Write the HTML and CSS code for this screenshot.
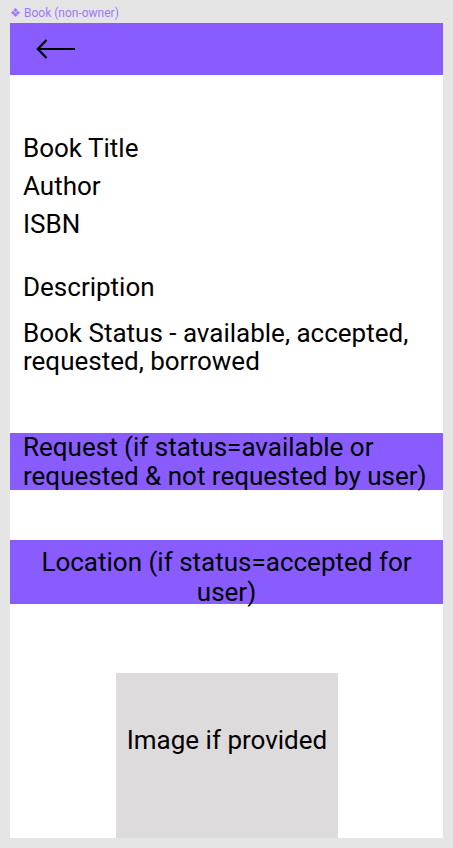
FILE: index.html
```html
<!DOCTYPE html>
<html>
<head>
<meta charset="utf-8">
<link rel="stylesheet" href="styles.css">
</head>
<body>
<div class="label">❖ Book (non-owner)</div>
<div class="frame">
  <header class="topbar">
    <svg class="back" width="40" height="22" viewBox="0 0 40 22">
      <path d="M1.5 11 H39 M10.5 2 L1.8 11 L10.5 20" fill="none" stroke="#000" stroke-width="2.2"/>
    </svg>
  </header>
  <section class="info">
    <div class="line">Book Title</div>
    <div class="line gap10">Author</div>
    <div class="line gap10">ISBN</div>
    <div class="line desc">Description</div>
    <div class="line status">Book Status - available, accepted, requested, borrowed</div>
  </section>
  <div class="bar request">Request (if status=available or requested &amp; not requested by user)</div>
  <div class="bar location">Location (if status=accepted for user)</div>
  <div class="image">Image if provided</div>
</div>
</body>
</html>
```
FILE: styles.css
```css
html, body { margin: 0; padding: 0; }
body {
  background: #e5e5e5;
  font-family: Roboto, "Noto Sans", sans-serif;
  color: #000;
  width: 453px;
  height: 848px;
  overflow: hidden;
}
.label {
  height: 23px;
  box-sizing: border-box;
  padding: 6px 0 0 10px;
  font-size: 12px;
  line-height: 14px;
  color: #9a7af4;
}
.frame {
  margin: 0 10px;
  height: 815px;
  background: #fff;
  overflow: hidden;
}
.topbar {
  height: 52px;
  background: #885cfe;
  display: flex;
  align-items: center;
  padding-left: 26px;
}
.back { display: block; }
.info {
  padding: 59px 13px 0 13px;
  font-size: 26px;
  line-height: 28px;
}
.gap10 { margin-top: 10px; }
.desc { margin-top: 35px; }
.status { margin-top: 18px; }
.bar {
  background: #885cfe;
  font-size: 26px;
}
.request {
  margin-top: 58px;
  height: 57px;
  box-sizing: border-box;
  padding: 0 13px;
  line-height: 29px;
}
.location {
  margin-top: 50px;
  height: 64px;
  box-sizing: border-box;
  padding: 7px 13px 0;
  line-height: 30px;
  text-align: center;
}
.image {
  margin: 69px 0 0 106px;
  width: 222px;
  height: 200px;
  background: #dddbdc;
  font-size: 26px;
  line-height: 28px;
  box-sizing: border-box;
  padding-top: 53px;
  text-align: center;
}
```
